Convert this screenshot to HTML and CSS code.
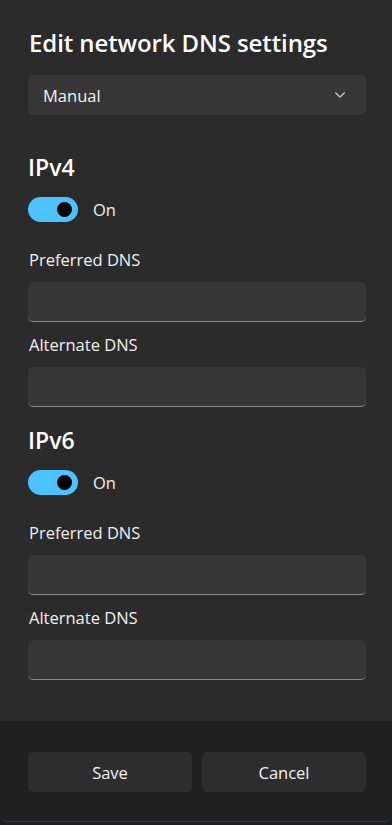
FILE: index.html
```html
<!DOCTYPE html>
<html lang="en">
<head>
<meta charset="utf-8">
<title>Edit network DNS settings</title>
<link rel="stylesheet" href="styles.css">
</head>
<body>
<div class="window">
  <main class="content">
    <h1 class="title">Edit network DNS settings</h1>
    <div class="select">
      <span>Manual</span>
      <svg class="chev" width="12" height="8" viewBox="0 0 12 8"><path d="M1.5 1.8 L6 6 L10.5 1.8" fill="none" stroke="#d0d0d0" stroke-width="1.2" stroke-linecap="round" stroke-linejoin="round"/></svg>
    </div>

    <section class="group">
      <h2 class="heading">IPv4</h2>
      <div class="toggle-row">
        <span class="toggle"><span class="knob"></span></span>
        <span class="toggle-label">On</span>
      </div>
      <label class="label">Preferred DNS</label>
      <div class="input"></div>
      <label class="label">Alternate DNS</label>
      <div class="input"></div>
    </section>

    <section class="group">
      <h2 class="heading">IPv6</h2>
      <div class="toggle-row">
        <span class="toggle"><span class="knob"></span></span>
        <span class="toggle-label">On</span>
      </div>
      <label class="label">Preferred DNS</label>
      <div class="input"></div>
      <label class="label">Alternate DNS</label>
      <div class="input"></div>
    </section>
  </main>
  <footer class="footer">
    <button class="btn">Save</button>
    <button class="btn">Cancel</button>
  </footer>
</div>
</body>
</html>
```

FILE: styles.css
```css
* { box-sizing: border-box; }
html, body {
  margin: 0;
  padding: 0;
  background: #1b1f2a;
  width: 392px;
  height: 825px;
  overflow: hidden;
}
body {
  font-family: "Open Sans", "Noto Sans", sans-serif;
  color: #ffffff;
}
.window {
  width: 392px;
  height: 822px;
  background: #2b2b2b;
  border-radius: 0 0 8px 8px;
  border-bottom: 1px solid #3a3a3a;
  overflow: hidden;
  display: flex;
  flex-direction: column;
}
.content {
  flex: 1;
  padding: 28px 26px 0 28px;
}
.title {
  margin: 0 0 17px 1px;
  font-size: 24px;
  line-height: 30px;
  font-weight: 600;
  letter-spacing: -0.1px;
}
.select {
  height: 40px;
  background: #373737;
  border-radius: 5px;
  display: flex;
  align-items: center;
  justify-content: space-between;
  padding: 0 20px 0 15px;
  font-size: 16.5px;
  color: #f2f2f2;
}
.chev { display: block; }
.group { display: flex; flex-direction: column; }
.group:first-of-type { margin-top: 37px; }
.group + .group { margin-top: 18px; }
.heading {
  margin: 0;
  font-size: 23px;
  line-height: 30px;
  font-weight: 600;
}
.toggle-row {
  display: flex;
  align-items: center;
  margin-top: 15px;
  height: 25px;
}
.toggle {
  width: 50px;
  height: 25px;
  border-radius: 13px;
  background: #4cc2ff;
  display: flex;
  align-items: center;
  justify-content: flex-end;
  padding-right: 6px;
}
.knob {
  width: 15px;
  height: 15px;
  border-radius: 50%;
  background: #000;
}
.toggle-label {
  margin-left: 15px;
  font-size: 16.5px;
  color: #f0f0f0;
}
.label {
  display: block;
  font-size: 16.5px;
  line-height: 22px;
  color: #f0f0f0;
  margin-top: 12px;
  margin-bottom: 11px;
  padding-left: 1px;
}
.toggle-row + .label { margin-top: 27px; }
.input {
  height: 40px;
  background: #363636;
  border-radius: 5px;
  border-bottom: 1px solid #8a8a8a;
}
.footer {
  height: 100px;
  background: #202020;
  display: flex;
  gap: 10px;
  padding: 31px 26px 0 28px;
}
.btn {
  flex: 1;
  height: 40px;
  background: #2d2d2d;
  border: none;
  border-radius: 5px;
  color: #f2f2f2;
  font-family: inherit;
  font-size: 16.5px;
}
```
